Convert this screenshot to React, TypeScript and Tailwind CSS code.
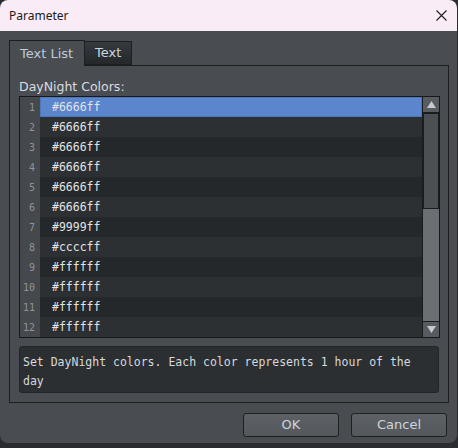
import React from "react";

const colors = [
  "#6666ff",
  "#6666ff",
  "#6666ff",
  "#6666ff",
  "#6666ff",
  "#6666ff",
  "#9999ff",
  "#ccccff",
  "#ffffff",
  "#ffffff",
  "#ffffff",
  "#ffffff",
];

const ui = "font-['DejaVu_Sans',_'Liberation_Sans',_sans-serif]";
const mono = "font-['DejaVu_Sans_Mono',_'Liberation_Mono',_monospace]";

function CloseIcon() {
  return (
    <svg width="11" height="11" viewBox="0 0 11 11" fill="none">
      <path d="M0.5 0.5 L10.5 10.5 M10.5 0.5 L0.5 10.5" stroke="#1f1f1f" strokeWidth="1.1" />
    </svg>
  );
}

function Arrow({ up }: { up?: boolean }) {
  return (
    <svg width="9" height="7" viewBox="0 0 9 7">
      <path d={up ? "M4.5 0 L9 7 L0 7 Z" : "M0 0 L9 0 L4.5 7 Z"} fill="#c5cad0" />
    </svg>
  );
}

function ColorList() {
  return (
    <div className="flex h-[242px] w-[421px] border border-[#16181a] bg-[#25282b]">
      <div className="flex w-[20px] flex-col bg-[#45484c]">
        {colors.map((_, i) => (
          <div
            key={i}
            className={`${mono} flex h-[20px] items-center justify-end pr-[5px] pt-px text-[10px] text-[#8e959c]`}
          >
            {i + 1}
          </div>
        ))}
      </div>
      <div className="flex flex-1 flex-col">
        {colors.map((c, i) => (
          <div
            key={i}
            className={`${mono} flex h-[20px] items-center pt-px text-[11.5px] text-[#e2e4e7] ${
              i === 0
                ? "border border-[#4d78b4] bg-[#5b86cd] pl-[11px]"
                : i % 2 === 1
                ? "bg-[#2d3033] pl-[12px]"
                : "bg-[#25282b] pl-[12px]"
            }`}
          >
            {c}
          </div>
        ))}
      </div>
      <div className="flex w-[17px] flex-col border-l border-[#1a1c1e] bg-[#6b6f73]">
        <div className="flex h-[16px] items-center justify-center border-b border-[#1a1c1e] bg-[#585c60]">
          <Arrow up />
        </div>
        <div className="h-[96px] border border-[#1a1c1e] bg-[#4c5054]" />
        <div className="flex-1" />
        <div className="flex h-[16px] items-center justify-center border-t border-[#1a1c1e] bg-[#585c60]">
          <Arrow />
        </div>
      </div>
    </div>
  );
}

export default function App() {
  return (
    <div className="h-[448px] w-[458px] overflow-hidden bg-[#2a2c2f]">
      <div className="flex h-[443px] w-[457px] flex-col overflow-hidden rounded-[8px]">
        {/* title bar */}
        <div className="flex h-[31px] items-center justify-between bg-[#f9ecf7] pl-[9px] pr-[10px]">
          <span className="font-['Noto_Sans',_'Liberation_Sans',_sans-serif] text-[12px] text-[#1a1a1a]">
            Parameter
          </span>
          <CloseIcon />
        </div>

        <div className={`${ui} flex flex-1 flex-col bg-[#494c50] px-[9px] pt-[9px]`}>
          {/* tabs */}
          <div className="flex h-[25px] items-end">
            <div className="relative z-10 -mb-px flex h-[26px] w-[76px] items-center border border-b-0 border-[#1c1e20] bg-[#494c50] pl-[10px] text-[13px] text-[#bccbdb]">
              Text List
            </div>
            <div className="flex h-[24px] w-[47px] items-center border border-l-0 border-[#1c1e20] bg-gradient-to-b from-[#363a3e] to-[#25282b] pl-[10px] text-[13px] text-[#cbd5df]">
              Text
            </div>
          </div>

          {/* tab page */}
          <div className="flex h-[338px] w-[440px] flex-col border border-[#1c1e20] px-[9px] pt-[13px]">
            <div className="h-[17px] text-[12.5px] leading-[15px] text-[#d9dde2]">DayNight Colors:</div>
            <ColorList />
            <div
              className={`${mono} mt-[8px] h-[47px] w-[420px] rounded-[3px] border border-[#222427] bg-[#2c2f32] px-[3px] pt-[6px] text-[11.5px] leading-[19px] text-[#d6d9dd]`}
            >
              Set DayNight colors. Each color represents 1 hour of the day
            </div>
          </div>

          {/* buttons */}
          <div className="flex justify-end gap-[12px] pr-[1px] pt-[10px]">
            <button className="h-[24px] w-[96px] rounded-[3px] border border-[#1e2022] bg-gradient-to-b from-[#5d6165] to-[#54585c] text-[13px] text-[#ccd5df]">
              OK
            </button>
            <button className="h-[24px] w-[96px] rounded-[3px] border border-[#1e2022] bg-gradient-to-b from-[#5d6165] to-[#54585c] text-[13px] text-[#ccd5df]">
              Cancel
            </button>
          </div>
        </div>
      </div>
    </div>
  );
}
